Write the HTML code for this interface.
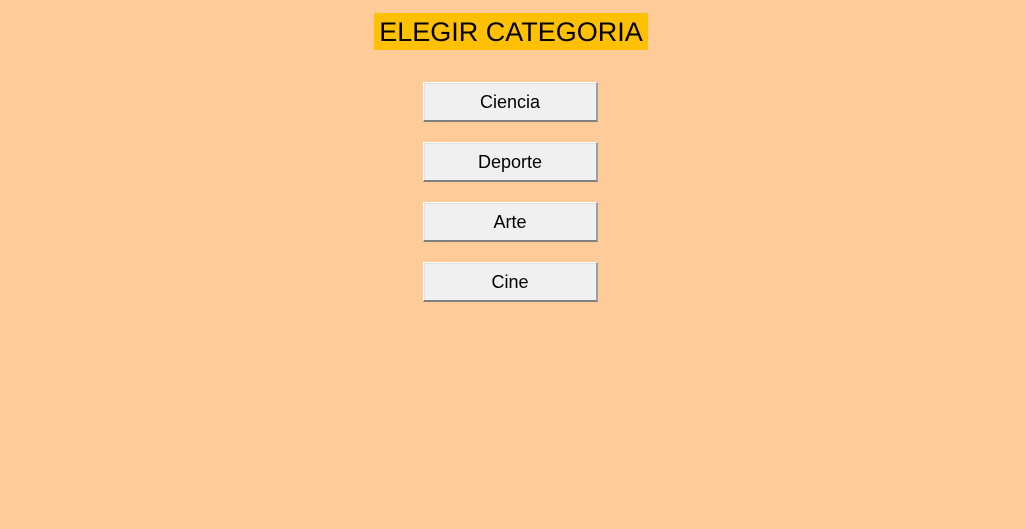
<!DOCTYPE html>
<html><head><style>
body{margin:0;width:1026px;height:529px;background:#ffcc99;font-family:"Liberation Sans",sans-serif;position:relative;overflow:hidden}
.t{position:absolute;left:374px;top:13px;width:274px;height:37px;background:#ffc000;font-size:27px;line-height:38px;text-align:center;color:#000}
.b{position:absolute;left:423px;width:175px;height:40px;box-sizing:border-box;background:#f0f0f0;border-top:1px solid #fff;border-left:1px solid #fff;border-right:2px solid #a0a0a0;border-bottom:2px solid #808080;box-shadow:inset 1px 1px 0 #e3e3e3;font-size:18px;line-height:39px;text-align:center;color:#000}
</style></head><body>
<div class="t">ELEGIR CATEGORIA</div>
<div class="b" style="top:82px">Ciencia</div>
<div class="b" style="top:142px">Deporte</div>
<div class="b" style="top:202px">Arte</div>
<div class="b" style="top:262px">Cine</div>
</body></html>
